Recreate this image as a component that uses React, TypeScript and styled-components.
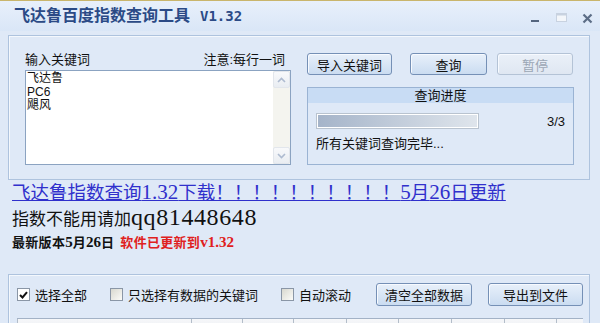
import styled, { createGlobalStyle } from 'styled-components';

const uiFont = `"Liberation Sans", "Noto Sans CJK SC", sans-serif`;
const serifFont = `"Liberation Serif", "Noto Sans CJK SC", serif`;

const GlobalStyle = createGlobalStyle`
  html, body {
    margin: 0;
    padding: 0;
  }
  body {
    width: 600px;
    height: 323px;
    overflow: hidden;
    background: #dfe9f7;
  }
`;

const Window = styled.div`
  width: 600px;
  height: 323px;
  box-sizing: border-box;
  overflow: hidden;
  display: flex;
  flex-direction: column;
  background: #dfe9f7;
  border-top: 1px solid #c9b56c;
  font-family: ${uiFont};
  font-size: 13px;
  color: #111;
`;

const TitleBar = styled.div`
  height: 30px;
  flex: none;
  display: flex;
  align-items: center;
  padding: 0 1px 0 14px;
  background: linear-gradient(#e8f0fb, #d9e6f7);
`;

const Title = styled.div`
  flex: 1;
  font-size: 16px;
  font-weight: bold;
  line-height: 30px;
  color: #2b4a86;
  white-space: nowrap;
`;

const Version = styled.span`
  margin-left: 10px;
  font-family: "DejaVu Sans Mono", monospace;
  font-size: 14px;
`;

const WinButtons = styled.div`
  display: flex;
  gap: 2px;
  align-self: stretch;
`;

const WinButton = styled.div`
  width: 24px;
  display: flex;
  align-items: center;
  justify-content: center;
  padding-top: 4px;
`;

const Body = styled.div`
  flex: 1;
  display: flex;
  flex-direction: column;
  padding: 4px 10px 0 8px;
`;

const Group = styled.div`
  box-sizing: border-box;
  border: 1px solid #aec3de;
  box-shadow: inset 1px 1px 0 #f4f8fd;
`;

const TopGroup = styled(Group)`
  height: 145px;
  display: grid;
  grid-template-columns: 266px 267px;
  column-gap: 16px;
  padding: 17px 15px 14px 16px;
`;

const Column = styled.div`
  display: flex;
  flex-direction: column;
`;

const LabelRow = styled.div`
  height: 14px;
  line-height: 14px;
  display: flex;
  justify-content: space-between;
  margin-bottom: 3px;
  padding-right: 6px;
`;

const TextBox = styled.div`
  height: 95px;
  box-sizing: border-box;
  display: flex;
  background: #fff;
  border: 1px solid #8ba3c1;
`;

const TextLines = styled.div`
  flex: 1;
  padding: 1px 0 0 1px;
  font-size: 12px;
  line-height: 13.5px;
`;

const ScrollBar = styled.div`
  width: 17px;
  display: flex;
  flex-direction: column;
  justify-content: space-between;
  background: #f4f4ef;
`;

const ScrollArrow = styled.div`
  height: 17px;
  box-sizing: border-box;
  display: flex;
  align-items: center;
  justify-content: center;
  border: 1px solid #e2e6ec;
  border-radius: 2px;
  background: linear-gradient(#f8f9fb, #e9edf2);
`;

const ButtonRow = styled.div`
  height: 22px;
  display: flex;
`;

const Button = styled.div<{ $w: number; $gap?: number; $disabled?: boolean }>`
  width: ${(p) => p.$w}px;
  margin-left: ${(p) => p.$gap ?? 0}px;
  box-sizing: border-box;
  display: flex;
  align-items: center;
  justify-content: center;
  border: 1px solid ${(p) => (p.$disabled ? '#b4c3d6' : '#7590b6')};
  border-radius: 3px;
  background: ${(p) =>
    p.$disabled
      ? 'linear-gradient(#eaf0f8, #dfe7f2)'
      : 'linear-gradient(#e8f0fa, #cadcf1)'};
  box-shadow: inset 1px 1px 0 #f7faff;
  color: ${(p) => (p.$disabled ? '#9ba6b4' : '#111')};
  font-size: 13px;
  white-space: nowrap;
`;

const ProgressBox = styled.div`
  height: 78px;
  margin-top: 12px;
  box-sizing: border-box;
  border: 1px solid #9ab3d3;
  display: flex;
  flex-direction: column;
`;

const ProgressHead = styled.div`
  height: 15px;
  line-height: 15px;
  text-align: center;
  background: #c8dcf4;
`;

const ProgressRow = styled.div`
  display: flex;
  align-items: center;
  justify-content: space-between;
  padding: 10px 8px 0 8px;
`;

const Bar = styled.div`
  width: 163px;
  height: 16px;
  box-sizing: border-box;
  border: 1px solid #b9c3cf;
  background: #fff;
  padding: 1px;
`;

const BarFill = styled.div`
  height: 100%;
  background: linear-gradient(to right, #a5b4c9, #dfe5ec);
`;

const Status = styled.div`
  padding: 8px 0 0 8px;
  line-height: 14px;
`;

const Info = styled.div`
  padding-left: 4px;
  display: flex;
  flex-direction: column;
`;

const LinkLine = styled.div`
  height: 24px;
  line-height: 24px;
  font-size: 18.5px;
  color: #3030cc;
  text-decoration: underline;
  white-space: nowrap;
`;

const QqLine = styled.div`
  height: 26px;
  line-height: 26px;
  font-size: 17px;
  color: #111;
  white-space: nowrap;
`;

const NoteLine = styled.div`
  height: 24px;
  line-height: 24px;
  font-size: 13px;
  font-weight: bold;
  letter-spacing: 0.3px;
  white-space: nowrap;
`;

const Num = styled.span<{ $size: number; $spacing?: number }>`
  font-family: ${serifFont};
  font-size: ${(p) => p.$size}px;
  letter-spacing: ${(p) => p.$spacing ?? 0}px;
`;

const Red = styled.span`
  margin-left: 6px;
  color: #e02020;
`;

const BottomGroup = styled(Group)`
  margin-top: 20px;
  flex: 1;
  border-bottom: none;
  padding: 8px 6px 0 8px;
`;

const OptionsRow = styled.div`
  height: 23px;
  display: flex;
  align-items: center;
  gap: 23px;
`;

const CheckItem = styled.label`
  display: flex;
  align-items: center;
  gap: 5px;
  white-space: nowrap;
`;

const Box = styled.span<{ $checked?: boolean }>`
  width: 13px;
  height: 13px;
  box-sizing: border-box;
  display: flex;
  align-items: center;
  justify-content: center;
  border: 1px solid #8a96a6;
  background: ${(p) =>
    p.$checked ? '#fff' : 'linear-gradient(135deg, #d8d8cf, #fbfbf8)'};
`;

const ButtonGroup = styled.div`
  margin-left: auto;
  display: flex;
  gap: 16px;
  height: 23px;
`;

const TableHead = styled.div`
  margin-top: 12px;
  display: flex;
  height: 20px;
  border-top: 1px solid #a3b2c6;
  background: linear-gradient(#f6f7f9, #e4e8ee);
`;

const HeadCell = styled.div<{ $w: number }>`
  width: ${(p) => p.$w}px;
  flex: none;
  border-left: 1px solid #b3bdc9;
`;

const columns = [173, 50, 50, 52, 51, 52, 52, 51, 30];

const Chevron = ({ up }: { up?: boolean }) => (
  <svg width="9" height="6" viewBox="0 0 9 6">
    <path
      d={up ? 'M1 5 L4.5 1.5 L8 5' : 'M1 1 L4.5 4.5 L8 1'}
      fill="none"
      stroke="#aebbd0"
      strokeWidth="1.6"
    />
  </svg>
);

const Check = () => (
  <svg width="9" height="8" viewBox="0 0 9 8">
    <path d="M1 4 L3.5 6.5 L8 1.2" fill="none" stroke="#111" strokeWidth="2" />
  </svg>
);

export default function App() {
  return (
    <>
      <GlobalStyle />
      <Window>
        <TitleBar>
          <Title>
            飞达鲁百度指数查询工具<Version>V1.32</Version>
          </Title>
          <WinButtons>
            <WinButton>
              <svg width="10" height="10" viewBox="0 0 10 10">
                <rect x="1" y="7" width="8" height="2" fill="#54657e" />
              </svg>
            </WinButton>
            <WinButton>
              <svg width="11" height="10" viewBox="0 0 11 10">
                <rect x="0.5" y="0.5" width="10" height="8" fill="#f3f6fa" stroke="#c8d2e0" />
                <rect x="0.5" y="0.5" width="10" height="2" fill="#c8d2e0" />
              </svg>
            </WinButton>
            <WinButton>
              <svg width="11" height="11" viewBox="0 0 11 11">
                <path d="M1.5 1.5 L9.5 9.5 M9.5 1.5 L1.5 9.5" stroke="#5c6d86" strokeWidth="2.2" />
              </svg>
            </WinButton>
          </WinButtons>
        </TitleBar>
        <Body>
          <TopGroup>
            <Column>
              <LabelRow>
                <span>输入关键词</span>
                <span>注意:每行一词</span>
              </LabelRow>
              <TextBox>
                <TextLines>
                  <div>飞达鲁</div>
                  <div>PC6</div>
                  <div>飓风</div>
                </TextLines>
                <ScrollBar>
                  <ScrollArrow>
                    <Chevron up />
                  </ScrollArrow>
                  <ScrollArrow>
                    <Chevron />
                  </ScrollArrow>
                </ScrollBar>
              </TextBox>
            </Column>
            <Column>
              <ButtonRow>
                <Button $w={85}>导入关键词</Button>
                <Button $w={77} $gap={18}>
                  查询
                </Button>
                <Button $w={76} $gap={10} $disabled>
                  暂停
                </Button>
              </ButtonRow>
              <ProgressBox>
                <ProgressHead>查询进度</ProgressHead>
                <ProgressRow>
                  <Bar>
                    <BarFill />
                  </Bar>
                  <span>3/3</span>
                </ProgressRow>
                <Status>所有关键词查询完毕...</Status>
              </ProgressBox>
            </Column>
          </TopGroup>
          <Info>
            <LinkLine>
              飞达鲁指数查询<Num $size={21}>1.32</Num>下载！！！！！！！！！！
              <Num $size={21}>5</Num>月<Num $size={21}>26</Num>日更新
            </LinkLine>
            <QqLine>
              指数不能用请加<Num $size={24} $spacing={0.6}>qq81448648</Num>
            </QqLine>
            <NoteLine>
              最新版本<Num $size={15}>5</Num>月<Num $size={15}>26</Num>日
              <Red>
                软件已更新到<Num $size={15}>v1.32</Num>
              </Red>
            </NoteLine>
          </Info>
          <BottomGroup>
            <OptionsRow>
              <CheckItem>
                <Box $checked>
                  <Check />
                </Box>
                选择全部
              </CheckItem>
              <CheckItem>
                <Box />
                只选择有数据的关键词
              </CheckItem>
              <CheckItem>
                <Box />
                自动滚动
              </CheckItem>
              <ButtonGroup>
                <Button $w={96}>清空全部数据</Button>
                <Button $w={95}>导出到文件</Button>
              </ButtonGroup>
            </OptionsRow>
            <TableHead>
              {columns.map((w, i) => (
                <HeadCell key={i} $w={w} />
              ))}
            </TableHead>
          </BottomGroup>
        </Body>
      </Window>
    </>
  );
}
